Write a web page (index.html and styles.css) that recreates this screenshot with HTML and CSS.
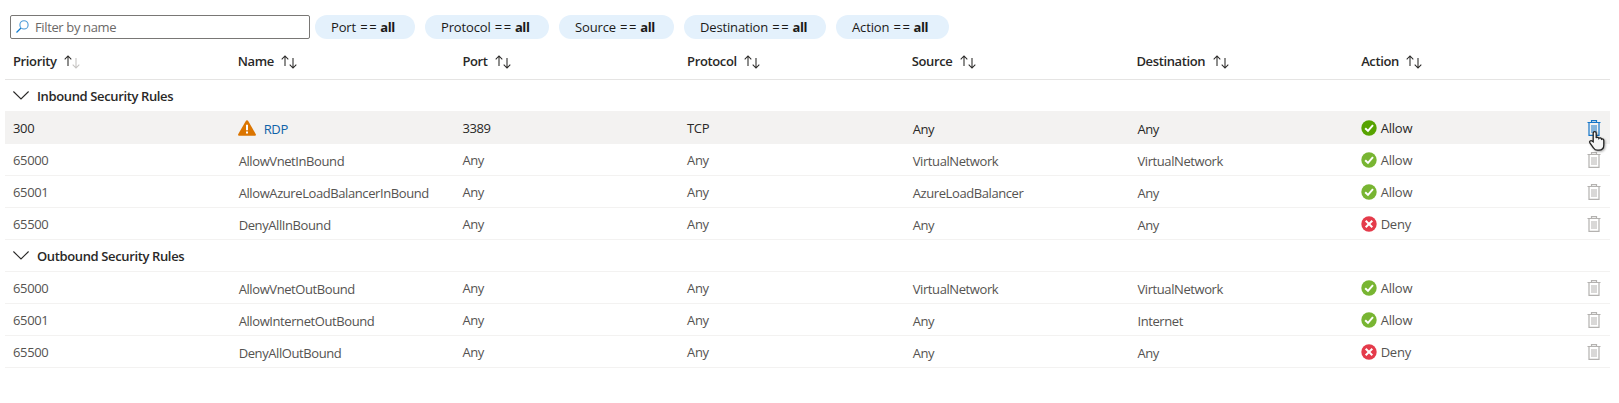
FILE: index.html
```html
<!DOCTYPE html>
<html lang="en">
<head>
<meta charset="utf-8">
<title>Security rules</title>
<link rel="stylesheet" href="styles.css">
</head>
<body>
<svg class="sprite" aria-hidden="true">
  <symbol id="up" viewBox="0 0 8 12"><path d="M4 11V1M.7 4.3 4 1l3.300 3.300" fill="none" stroke="currentColor" stroke-width="1.050"/></symbol>
  <symbol id="down" viewBox="0 0 8 12"><path d="M4 1v10M.7 7.700 4 11l3.300-3.300" fill="none" stroke="currentColor" stroke-width="1.050"/></symbol>
  <symbol id="chevron" viewBox="0 0 16 9"><path d="M.4.500 8 8l7.600-7.500" fill="none" stroke="currentColor" stroke-width="1.100"/></symbol>
  <symbol id="ok" viewBox="0 0 16 16"><circle cx="8" cy="8" r="7.700" fill="currentColor"/><path d="M4.200 8.200 7 10.900l5-5.700" fill="none" stroke="#fff" stroke-width="2"/></symbol>
  <symbol id="no" viewBox="0 0 16 16"><circle cx="8" cy="8" r="7.700" fill="currentColor"/><path d="m4.700 4.700 6.600 6.600m0-6.600-6.600 6.600" fill="none" stroke="#fff" stroke-width="2"/></symbol>
  <symbol id="trash" viewBox="0 0 14 16"><path d="M4.500 2V.600h5V2M.500 2.500h13M2 3v12.400h10V3" fill="none" stroke="currentColor" stroke-width="1.200"/><path d="M4 5h6v8H4z" fill="currentColor" opacity=".5"/></symbol>
</svg>
<main class="rules">
  <div class="toolbar">
    <div class="search">
      <svg class="lens" viewBox="0 0 13 13"><path d="M.500 12.500 5 8" stroke="#0f7bd0" stroke-width="1.200"/><circle cx="8" cy="4.900" r="4.100" fill="none" stroke="#4a9ad8" stroke-width="1.100"/></svg>
      <span>Filter by name</span>
    </div>
    <div class="pill port"><span>Port <span class="eq">==</span> <b>all</b></span></div>
    <div class="pill protocol"><span>Protocol <span class="eq">==</span> <b>all</b></span></div>
    <div class="pill source"><span>Source <span class="eq">==</span> <b>all</b></span></div>
    <div class="pill destination"><span>Destination <span class="eq">==</span> <b>all</b></span></div>
    <div class="pill action"><span>Action <span class="eq">==</span> <b>all</b></span></div>
  </div>
  <div class="row head">
    <div><span>Priority</span><svg class="arrow"><use href="#up"/></svg><svg class="arrow low faint"><use href="#down"/></svg></div>
    <div><span>Name</span><svg class="arrow"><use href="#up"/></svg><svg class="arrow low"><use href="#down"/></svg></div>
    <div><span>Port</span><svg class="arrow"><use href="#up"/></svg><svg class="arrow low"><use href="#down"/></svg></div>
    <div><span>Protocol</span><svg class="arrow"><use href="#up"/></svg><svg class="arrow low"><use href="#down"/></svg></div>
    <div><span>Source</span><svg class="arrow"><use href="#up"/></svg><svg class="arrow low"><use href="#down"/></svg></div>
    <div><span>Destination</span><svg class="arrow"><use href="#up"/></svg><svg class="arrow low"><use href="#down"/></svg></div>
    <div><span>Action</span><svg class="arrow"><use href="#up"/></svg><svg class="arrow low"><use href="#down"/></svg></div>
  </div>
  <div class="row group"><svg class="chevron"><use href="#chevron"/></svg><span>Inbound Security Rules</span></div>
  <div class="row rule selected">
    <div>300</div>
    <div class="link"><svg class="warn" viewBox="0 0 18 16"><path d="M9 .300c.5 0 .9.300 1.200.800l7.500 13c.5.900 0 1.700-1 1.700H1.300c-1 0-1.500-.800-1-1.700l7.500-13C8.100.600 8.500.300 9 .300Z" fill="#db7500"/><path d="M8 4.800h2v5.400H8zM8 11.400h2v2H8z" fill="#fff"/></svg><span>RDP</span></div>
    <div>3389</div><div>TCP</div><div class="low-text">Any</div><div class="low-text">Any</div>
    <div class="status allow"><svg><use href="#ok"/></svg><span>Allow</span></div>
    <div class="delete"><svg class="trash"><use href="#trash"/></svg>
      <svg class="cursor" viewBox="0 0 18 22"><path d="M5.200 11.800V3.200c0-2.200 3-2.200 3 0v4.700c.4-.900 2.400-.800 2.700.5.600-.900 2.300-.600 2.600.700.900-.600 2.300 0 2.300 1.500v4.500c0 3-1.800 5.100-4.900 5.100H9.300c-1.700 0-2.800-.8-3.700-2.200L1.900 13c-1.100-1.800.900-3 2.100-2.100Z" fill="#f6f6f6" stroke="#222" stroke-width="1.300"/></svg>
    </div>
  </div>
  <div class="row rule">
    <div>65000</div><div class="low-text">AllowVnetInBound</div><div>Any</div><div>Any</div><div class="low-text">VirtualNetwork</div><div class="low-text">VirtualNetwork</div>
    <div class="status allow"><svg><use href="#ok"/></svg><span>Allow</span></div><div class="delete"><svg class="trash"><use href="#trash"/></svg></div>
  </div>
  <div class="row rule">
    <div>65001</div><div class="low-text">AllowAzureLoadBalancerInBound</div><div>Any</div><div>Any</div><div class="low-text">AzureLoadBalancer</div><div class="low-text">Any</div>
    <div class="status allow"><svg><use href="#ok"/></svg><span>Allow</span></div><div class="delete"><svg class="trash"><use href="#trash"/></svg></div>
  </div>
  <div class="row rule">
    <div>65500</div><div class="low-text">DenyAllInBound</div><div>Any</div><div>Any</div><div class="low-text">Any</div><div class="low-text">Any</div>
    <div class="status deny"><svg><use href="#no"/></svg><span>Deny</span></div><div class="delete"><svg class="trash"><use href="#trash"/></svg></div>
  </div>
  <div class="row group"><svg class="chevron"><use href="#chevron"/></svg><span>Outbound Security Rules</span></div>
  <div class="row rule">
    <div>65000</div><div class="low-text">AllowVnetOutBound</div><div>Any</div><div>Any</div><div class="low-text">VirtualNetwork</div><div class="low-text">VirtualNetwork</div>
    <div class="status allow"><svg><use href="#ok"/></svg><span>Allow</span></div><div class="delete"><svg class="trash"><use href="#trash"/></svg></div>
  </div>
  <div class="row rule">
    <div>65001</div><div class="low-text">AllowInternetOutBound</div><div>Any</div><div>Any</div><div class="low-text">Any</div><div class="low-text">Internet</div>
    <div class="status allow"><svg><use href="#ok"/></svg><span>Allow</span></div><div class="delete"><svg class="trash"><use href="#trash"/></svg></div>
  </div>
  <div class="row rule">
    <div>65500</div><div class="low-text">DenyAllOutBound</div><div>Any</div><div>Any</div><div class="low-text">Any</div><div class="low-text">Any</div>
    <div class="status deny"><svg><use href="#no"/></svg><span>Deny</span></div><div class="delete"><svg class="trash"><use href="#trash"/></svg></div>
  </div>
</main>
</body>
</html>
```

FILE: styles.css
```css
* { box-sizing: border-box; }
body { margin: 0; background: #fff; color: #292827; font: 13px/18px "Open Sans", "Noto Sans", sans-serif; letter-spacing: -0.37px; }
svg { display: block; flex: none; }
.sprite { display: none; }
.rules { padding: 15px 9px 0 5px; }
.toolbar { display: flex; height: 24px; margin-left: 5px; }
.search { width: 300px; border: 1px solid #797775; border-radius: 2px; display: flex; align-items: center; gap: 6px; padding: 0 0 1px 5px; color: #6b6967; margin-right: 5px; }
.lens { width: 13px; height: 13px; }
.pill { height: 24px; border-radius: 12px; background: #e4f1fc; color: #1b1a19; padding: 3px 0 3px 16px; margin-right: 10px; white-space: nowrap; letter-spacing: -0.15px; }
.eq { letter-spacing: 1.500px; margin-left: 1px; }
.pill b { letter-spacing: -0.400px; margin-left: -1px; }
.pill.port { width: 100px; }
.pill.protocol { width: 124px; }
.pill.source { width: 115px; }
.pill.destination { width: 142px; }
.pill.action { width: 113px; }
.row { height: 32px; display: grid; grid-template-columns: repeat(6, 224.700px) 1fr 38px; align-items: center; border-bottom: 1px solid #f3f2f1; padding-left: 8px; white-space: nowrap; }
.head { height: 41px; border-bottom-color: #e5e4e3; font-weight: 600; }
.head > div { display: flex; align-items: center; height: 40px; padding-top: 4px; }
.head span { margin-right: 7.500px; }
.arrow { width: 8px; height: 12px; }
.low { margin-top: 3px; }
.faint { color: #c4c2c0; }
.group { display: flex; gap: 8px; font-weight: 600; }
.chevron { width: 16px; height: 9px; }
.rule { color: #555351; }
.low-text { padding: 2px 0 0 1px; letter-spacing: -0.41px; }
.status, .link { display: flex; align-items: center; }
.status { gap: 4px; margin-left: -0.5px; letter-spacing: -0.2px; }
.status svg { width: 16px; height: 16px; }
.status.allow svg { color: #78b532; }
.status.deny svg { color: #e43b4b; }
.delete { position: relative; }
.trash { width: 14px; height: 16px; margin-left: 15px; color: #b4b2b0; }
.selected { background: #f3f2f1; color: #292827; }
.selected .allow svg { color: #57a300; }
.selected .trash { color: #1676c8; }
.link { color: #0f63a8; gap: 8px; }
.link span { padding-top: 2px; }
.warn { width: 18px; height: 16px; }
.cursor { position: absolute; left: 16px; top: 10px; width: 18px; height: 22px; z-index: 1; filter: drop-shadow(1px 1px 1px #0005); }
```
